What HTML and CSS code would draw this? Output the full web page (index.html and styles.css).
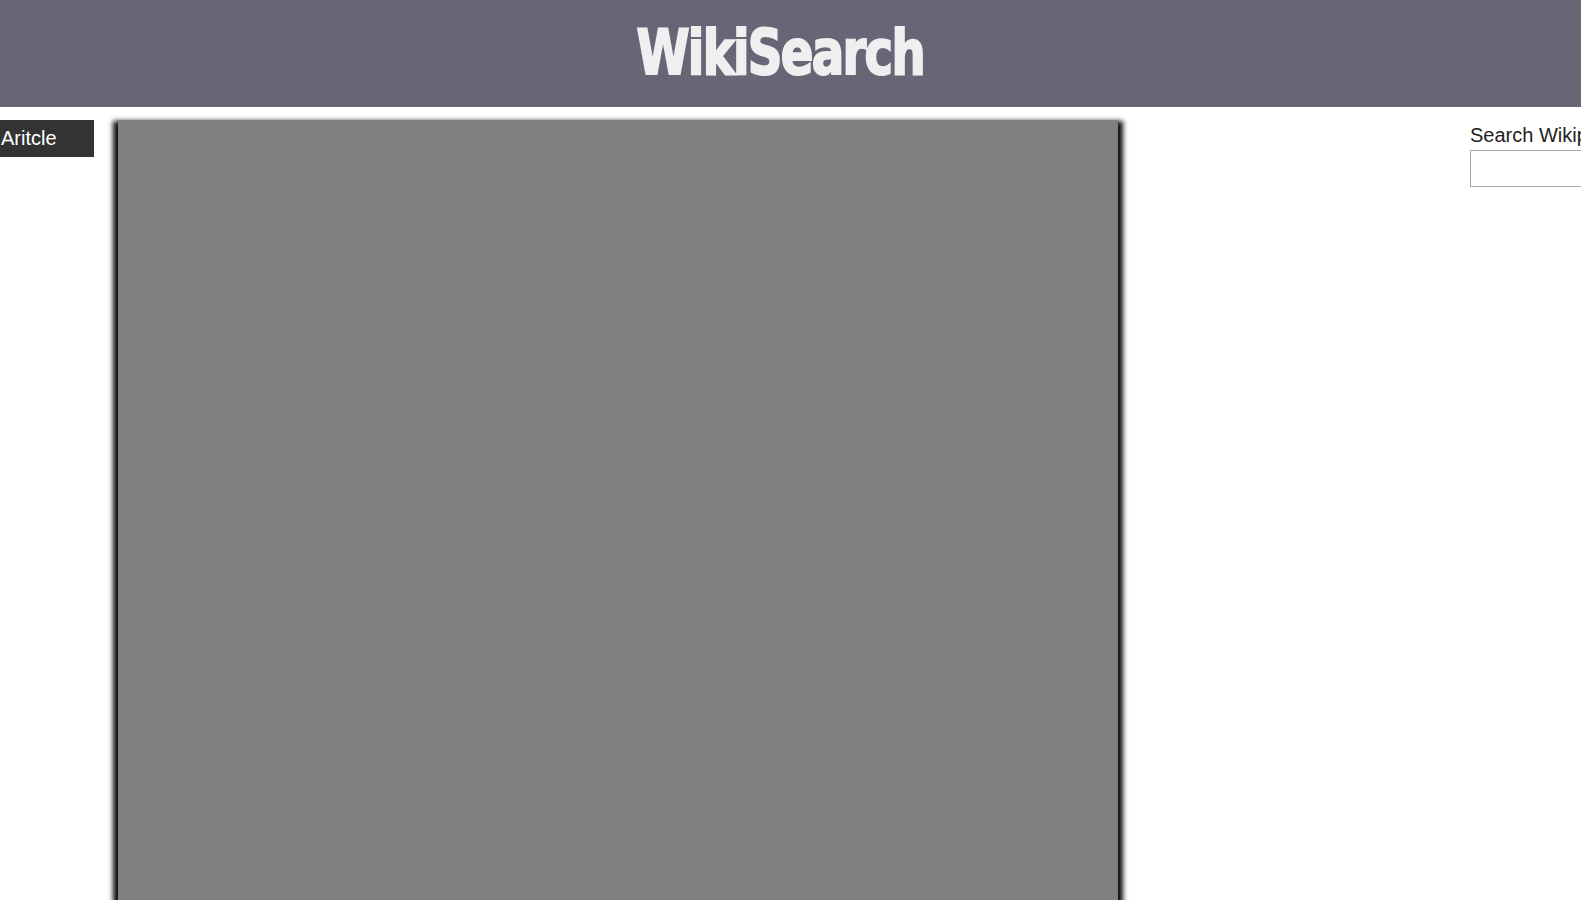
FILE: index.html
```html
<!DOCTYPE html>
<html lang="en">
<head>
<meta charset="utf-8">
<title>WikiSearch</title>
<link rel="stylesheet" href="styles.css">
</head>
<body>
<header class="site-header">
  <h1 class="site-title">WikiSearch</h1>
</header>
<div class="layout">
  <nav class="tabs">
    <div class="tab active">Aritcle</div>
  </nav>
  <main class="article-frame"></main>
  <aside class="sidebar">
    <label class="search-label" for="q">Search Wikipedia</label>
    <input class="search-input" id="q" type="text">
  </aside>
</div>
</body>
</html>
```
FILE: styles.css
```css
html, body {
  margin: 0;
  padding: 0;
  overflow: hidden;
}
body {
  font-family: "Liberation Sans", Arial, sans-serif;
  background: #ffffff;
  width: 1581px;
}
.site-header {
  height: 107px;
  background: #676677;
  display: flex;
  justify-content: center;
  align-items: flex-start;
  padding-right: 21px;
  box-sizing: border-box;
}
.site-title {
  margin: 0;
  margin-top: 17px;
  font-family: "DejaVu Sans Condensed", "DejaVu Sans", sans-serif;
  font-weight: bold;
  font-size: 63px;
  line-height: 72px;
  color: #efefef;
  letter-spacing: -2px;
  -webkit-text-stroke: 2px #efefef;
  transform: scaleX(0.85);
}
.layout {
  display: flex;
  align-items: flex-start;
  padding-top: 13px;
}
.tabs {
  width: 94px;
  flex-shrink: 0;
}
.tab {
  background: #333333;
  color: #ffffff;
  font-size: 20px;
  height: 37px;
  line-height: 37px;
  padding-left: 1px;
}
.article-frame {
  width: 1000px;
  height: 900px;
  flex-shrink: 0;
  margin-left: 24px;
  background: #808080;
  box-shadow: 0 6px 5px 5px rgba(0, 0, 0, 0.95);
}
.sidebar {
  margin-left: 352px;
  width: 250px;
  flex-shrink: 0;
  display: flex;
  flex-direction: column;
  padding-top: 3px;
}
.search-label {
  font-size: 20px;
  color: #222222;
  line-height: 24px;
  margin-bottom: 3px;
}
.search-input {
  width: 200px;
  height: 37px;
  box-sizing: border-box;
  border: 1px solid #a8a8a8;
  margin: 0;
  padding: 0;
}
```
